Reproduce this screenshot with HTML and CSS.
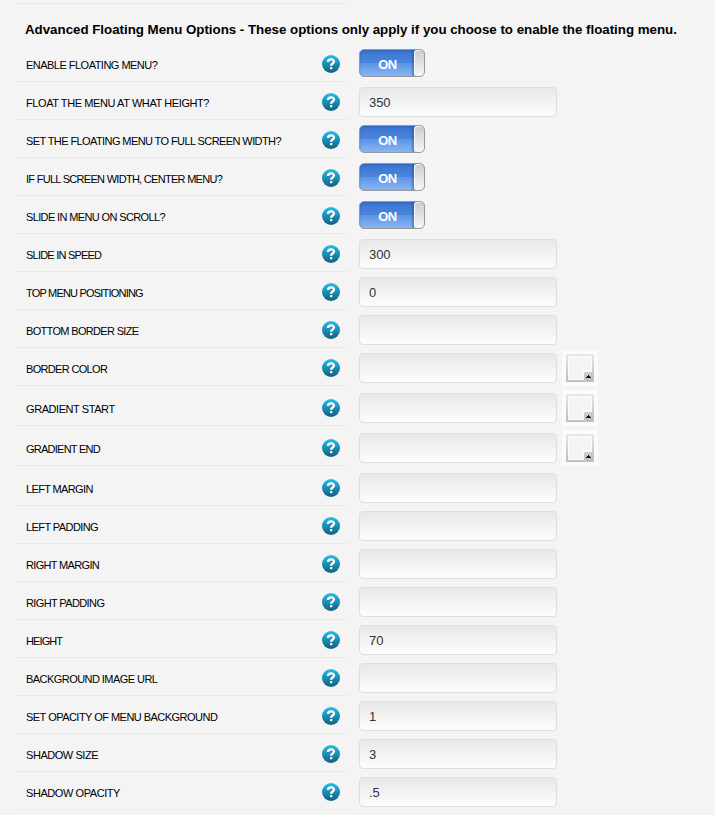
FILE: index.html
```html
<!DOCTYPE html>
<html lang="en">
<head>
<meta charset="utf-8">
<title>Floating Menu Options</title>
<link rel="stylesheet" href="styles.css">
</head>
<body>
<svg class="defs" width="0" height="0" aria-hidden="true">
<defs>
<linearGradient id="ball" x1="0" y1="0" x2="0" y2="1"><stop offset="0" stop-color="#2cbce8"/><stop offset=".5" stop-color="#1b8db3"/><stop offset="1" stop-color="#125f7b"/></linearGradient>
<linearGradient id="frame" x1="0" y1="0" x2="0" y2="1"><stop offset="0" stop-color="#e6e6e6"/><stop offset="1" stop-color="#bdbdbd"/></linearGradient>
<symbol id="help" viewBox="0 0 18 18"><circle cx="9" cy="9" r="9" fill="url(#ball)"/><path d="M6 7.1C6 3.4 12 3.5 12 6.6C12 8.5 9.1 8.6 9.1 10.7" fill="none" stroke="#fff" stroke-width="2.3"/><rect x="8" y="12" width="2.3" height="2.2" rx=".5" fill="#fff"/></symbol>
<symbol id="swatch" viewBox="0 0 36 36"><rect width="36" height="36" fill="#fbfbfb"/><rect x="4" y="4" width="28" height="28" rx="1" fill="url(#frame)"/><path d="M6 6h24v16h-8v8H6z" fill="#fff"/><path d="M7 7h22v14h-8v8H7z" fill="#f4f4f4"/><path d="M21 29V21h8v1h-7v7z" fill="#fff"/><path d="M26 25h1v1h1v1h1v1h-5v-1h1v-1h1z" fill="#151515"/></symbol>
</defs>
</svg>
<main class="panel">
<h1 class="title">Advanced Floating Menu Options - These options only apply if you choose to enable the floating menu.</h1>
<div id="rows" class="rows"></div>
</main>
<script src="rows.js"></script>
</body>
</html>
```
FILE: styles.css
```css
* { box-sizing: border-box; }
body { margin: 0; background: #f4f4f4; color: #000; font-family: "Liberation Sans", Arial, sans-serif; overflow: hidden; }
.defs { display: block; width: 0; height: 0; }
.panel { padding: 3px 0 0 15px; }
.title { margin: 0; height: 41px; padding: 18px 0 0 10px; font-size: 13.33px; line-height: 17px; font-weight: bold; letter-spacing: -0.02px; white-space: nowrap; position: relative; }
.title::before { content: ""; position: absolute; left: 0; top: 0; width: 333px; height: 1px; background: #e9e9e9; }
.row { display: flex; height: 38px; }
.row-color { height: 40px; }
.label { display: flex; justify-content: space-between; width: 333px; height: 38px; padding: 11px 8px 0 11px; border-bottom: 1px solid #e9e9e9; font-size: 11px; line-height: 20px; white-space: nowrap; }
.help { width: 18px; height: 18px; display: block; }
.field { width: 198px; height: 30px; margin: 5px 0 0 11px; padding: 1px 9px; border: 1px solid #dedede; border-radius: 4px; background: linear-gradient(#e8e8e8, #fdfdfd); color: #333; font: 13px/26px "Liberation Sans", Arial, sans-serif; letter-spacing: -0.1px; outline: none; }
.toggle { display: flex; width: 66px; height: 28px; margin: 5px 0 0 11px; border: 1px solid #999; border-radius: 5px; overflow: hidden; background: linear-gradient(#3b75d2 0, #4b84dc 49%, #5c94e4 51%, #87b6f5 100%); box-shadow: inset 0 2px 2px rgba(30, 70, 150, .25); }
.toggle-text { width: 54px; color: #fff; font-size: 13px; font-weight: bold; line-height: 30px; text-align: center; padding-left: 1px; letter-spacing: -0.4px; box-shadow: inset -3px 0 2px -1px rgba(20, 60, 130, .35); }
.toggle-knob { width: 10px; height: 26px; border-top: 1px solid #f8f8f8; border-left: 1px solid #f8f8f8; border-radius: 3px 4px 4px 3px; background: linear-gradient(#cdcdcd, #f8f8f8); }
.swatch { display: block; width: 36px; height: 36px; margin: 2px 0 0 5px; }
```
FILE: rows.js
```js
// label, value, label tracking in px
const rows = [
  ["ENABLE FLOATING MENU?", "on", -0.52],
  ["FLOAT THE MENU AT WHAT HEIGHT?", "350", -0.41],
  ["SET THE FLOATING MENU TO FULL SCREEN WIDTH?", "on", -0.59],
  ["IF FULL SCREEN WIDTH, CENTER MENU?", "on", -0.71],
  ["SLIDE IN MENU ON SCROLL?", "on", -0.63],
  ["SLIDE IN SPEED", "300", -0.78],
  ["TOP MENU POSITIONING", "0", -0.8],
  ["BOTTOM BORDER SIZE", "", -0.67],
  ["BORDER COLOR", "color", -0.67],
  ["GRADIENT START", "color", -0.43],
  ["GRADIENT END", "color", -0.75],
  ["LEFT MARGIN", "", -0.64],
  ["LEFT PADDING", "", -0.58],
  ["RIGHT MARGIN", "", -0.67],
  ["RIGHT PADDING", "", -0.62],
  ["HEIGHT", "70", -0.9],
  ["BACKGROUND IMAGE URL", "", -0.55],
  ["SET OPACITY OF MENU BACKGROUND", "1", -0.53],
  ["SHADOW SIZE", "3", -0.45],
  ["SHADOW OPACITY", ".5", -0.43]
];
document.getElementById("rows").innerHTML = rows.map(([label, value, tracking]) => {
  const color = value === "color";
  const control = value === "on"
    ? '<div class="toggle"><span class="toggle-text">ON</span><span class="toggle-knob"></span></div>'
    : `<input class="field" type="text" value="${color ? "" : value}">`;
  const swatch = color ? '<svg class="swatch"><use href="#swatch"/></svg>' : "";
  return `<div class="row${color ? " row-color" : ""}"><div class="label"><span style="letter-spacing:${tracking}px">${label}</span><svg class="help"><use href="#help"/></svg></div>${control}${swatch}</div>`;
}).join("");
```
